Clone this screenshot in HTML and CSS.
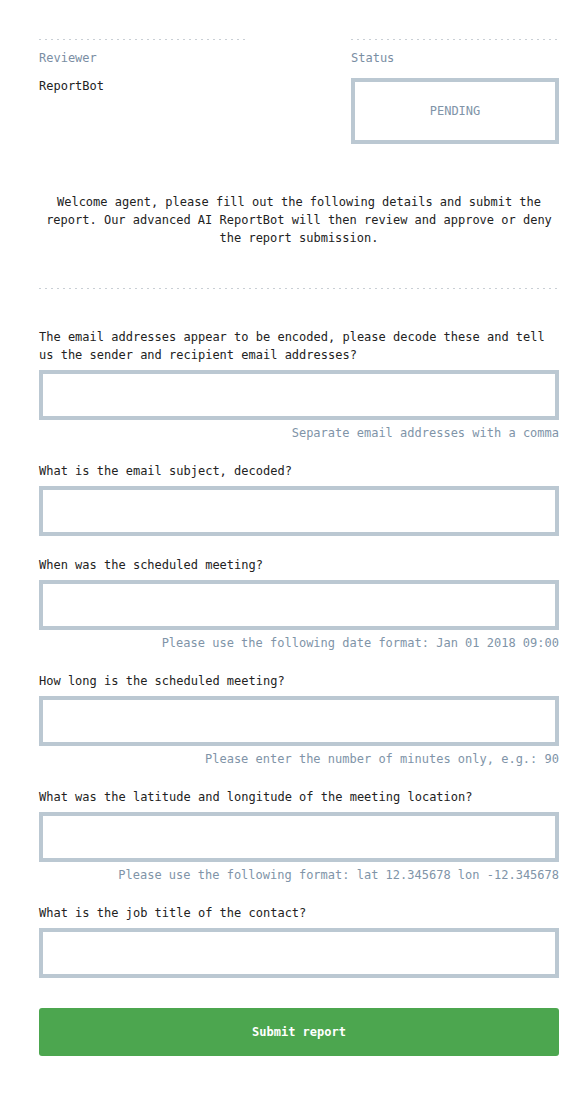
FILE: index.html
```html
<!DOCTYPE html>
<html>
<head>
<meta charset="utf-8">
<link rel="stylesheet" href="styles.css">
</head>
<body>
<div class="page">
  <div class="meta">
    <div class="meta-col">
      <div class="dots"></div>
      <div class="meta-label">Reviewer</div>
      <div class="meta-value">ReportBot</div>
    </div>
    <div class="meta-col">
      <div class="dots"></div>
      <div class="meta-label">Status</div>
      <div class="status-box">PENDING</div>
    </div>
  </div>

  <p class="intro">Welcome agent, please fill out the following details and submit the report. Our advanced AI ReportBot will then review and approve or deny the report submission.</p>

  <div class="dots"></div>

  <form class="form">
    <div class="field">
      <label class="question">The email addresses appear to be encoded, please decode these and tell us the sender and recipient email addresses?</label>
      <input class="answer" type="text">
      <div class="hint">Separate email addresses with a comma</div>
    </div>
    <div class="field">
      <label class="question">What is the email subject, decoded?</label>
      <input class="answer" type="text">
    </div>
    <div class="field">
      <label class="question">When was the scheduled meeting?</label>
      <input class="answer" type="text">
      <div class="hint">Please use the following date format: Jan 01 2018 09:00</div>
    </div>
    <div class="field">
      <label class="question">How long is the scheduled meeting?</label>
      <input class="answer" type="text">
      <div class="hint">Please enter the number of minutes only, e.g.: 90</div>
    </div>
    <div class="field">
      <label class="question">What was the latitude and longitude of the meeting location?</label>
      <input class="answer" type="text">
      <div class="hint">Please use the following format: lat 12.345678 lon -12.345678</div>
    </div>
    <div class="field">
      <label class="question">What is the job title of the contact?</label>
      <input class="answer" type="text">
    </div>
    <button class="submit" type="button">Submit report</button>
  </form>
</div>
</body>
</html>
```

FILE: styles.css
```css
* { box-sizing: border-box; }

html, body {
  margin: 0;
  padding: 0;
  background: #ffffff;
}

body {
  font-family: "DejaVu Sans Mono", "Liberation Mono", monospace;
  font-size: 12px;
  line-height: 18px;
  color: #222222;
}

.page {
  width: 520px;
  margin-left: 39px;
  padding-top: 39px;
  padding-bottom: 40px;
}

.dots {
  height: 1px;
  background-image: repeating-linear-gradient(to right, #c9cfd5 0, #c9cfd5 2px, transparent 2px, transparent 6px);
}

.meta {
  display: flex;
  justify-content: space-between;
}

.meta-col {
  width: 208px;
}

.meta-label {
  margin-top: 9px;
  color: #7a8ea3;
}

.meta-value {
  margin-top: 10px;
}

.status-box {
  margin-top: 11px;
  height: 66px;
  border: 4px solid #bbc8d2;
  display: flex;
  align-items: center;
  justify-content: center;
  color: #8094a8;
}

.intro {
  margin: 49px 0 41px;
  text-align: center;
}

.form {
  display: flex;
  flex-direction: column;
  gap: 20px;
  margin-top: 39px;
}

.field {
  display: flex;
  flex-direction: column;
}

.question {
  display: block;
  margin-bottom: 6px;
}

.answer {
  display: block;
  width: 100%;
  height: 50px;
  border: 4px solid #bbc8d2;
  border-radius: 0;
  background: #ffffff;
  font: inherit;
  padding: 0 10px;
  outline: none;
}

.hint {
  margin-top: 4px;
  text-align: right;
  color: #8094a8;
}

.submit {
  margin-top: 10px;
  height: 48px;
  width: 100%;
  border: none;
  border-radius: 3px;
  background: #4ca64f;
  color: #ffffff;
  font-family: inherit;
  font-size: 12px;
  font-weight: bold;
  cursor: pointer;
}
```
